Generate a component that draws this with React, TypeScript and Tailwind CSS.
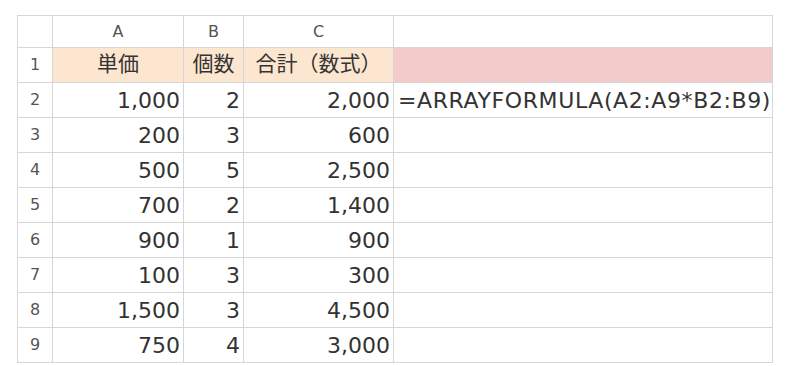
import React from "react";

const rows: [string, string, string][] = [
  ["1,000", "2", "2,000"],
  ["200", "3", "600"],
  ["500", "5", "2,500"],
  ["700", "2", "1,400"],
  ["900", "1", "900"],
  ["100", "3", "300"],
  ["1,500", "3", "4,500"],
  ["750", "4", "3,000"],
];

const font = { fontFamily: '"DejaVu Sans", "Noto Sans CJK JP", sans-serif' };

export default function App() {
  const cell = "border border-[#d6d6d6] p-0";
  return (
    <div className="w-[800px] h-[366px] bg-white pl-[17px] pt-[15px]" style={font}>
      <table className="border-collapse table-fixed text-[#333]">
        <colgroup>
          <col className="w-[35px]" />
          <col className="w-[131px]" />
          <col className="w-[60px]" />
          <col className="w-[150px]" />
          <col className="w-[379px]" />
        </colgroup>
        <thead>
          <tr className="h-[32px] text-[16px] text-[#555]">
            <th className={cell}></th>
            <th className={`${cell} font-normal`}>A</th>
            <th className={`${cell} font-normal`}>B</th>
            <th className={`${cell} font-normal`}>C</th>
            <th className={cell}></th>
          </tr>
        </thead>
        <tbody>
          <tr className="h-[35px] text-[21px]">
            <td className={`${cell} text-center text-[16px] text-[#555]`}>1</td>
            <td className={`${cell} bg-[#fde6d0] text-center`}>単価</td>
            <td className={`${cell} bg-[#fde6d0] text-center`}>個数</td>
            <td className={`${cell} bg-[#fde6d0] text-center`}>合計（数式）</td>
            <td className={`${cell} bg-[#f3cbcb]`}></td>
          </tr>
          {rows.map((r, i) => (
            <tr key={i} className="h-[35px] text-[22px]">
              <td className={`${cell} text-center text-[16px] text-[#555]`}>{i + 2}</td>
              <td className={`${cell} text-right pr-[3px]`}>{r[0]}</td>
              <td className={`${cell} text-right pr-[3px]`}>{r[1]}</td>
              <td className={`${cell} text-right pr-[3px]`}>{r[2]}</td>
              <td className={`${cell} pl-[4px] whitespace-nowrap tracking-[0.6px]`}>
                {i === 0 ? "=ARRAYFORMULA(A2:A9*B2:B9)" : ""}
              </td>
            </tr>
          ))}
        </tbody>
      </table>
    </div>
  );
}
